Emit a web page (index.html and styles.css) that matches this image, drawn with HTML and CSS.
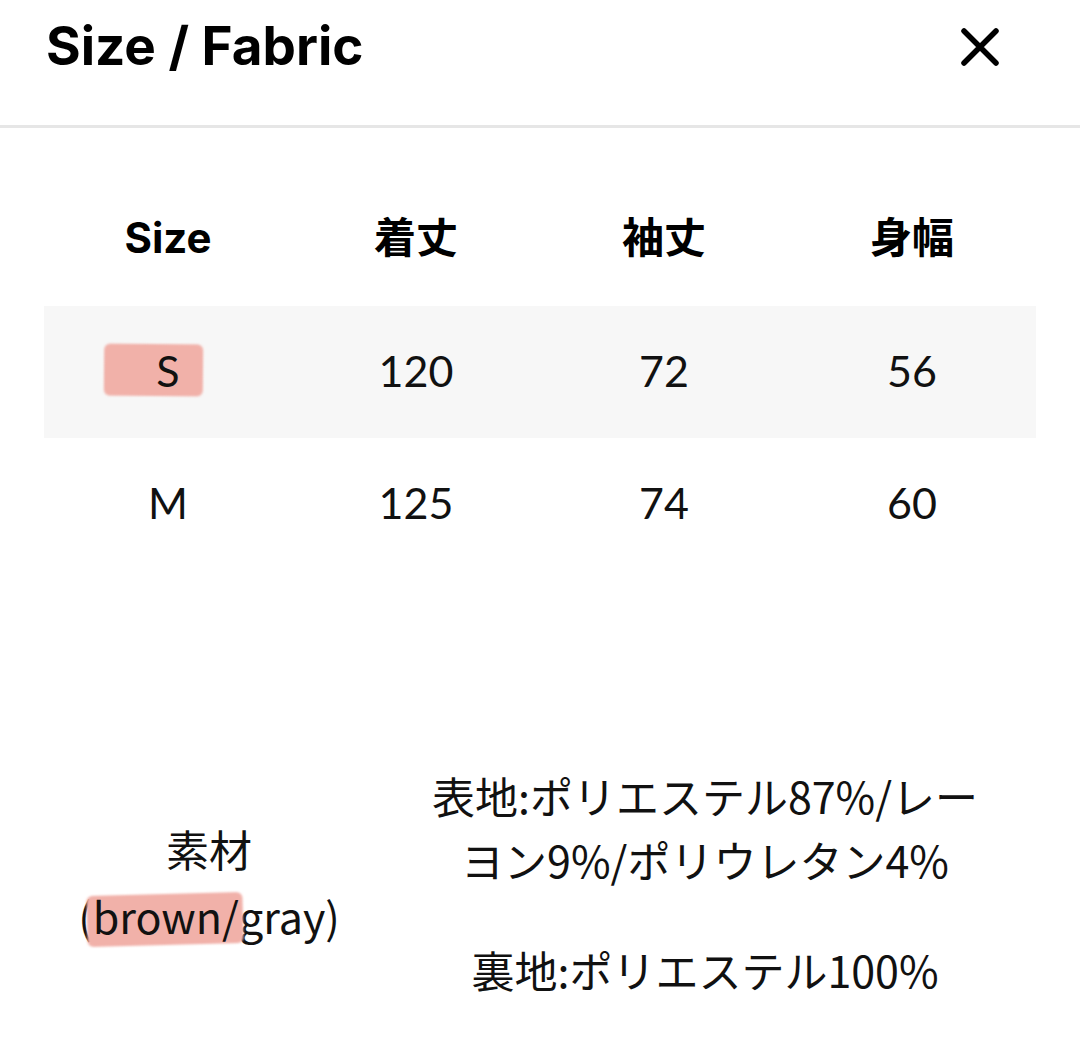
FILE: index.html
```html
<!DOCTYPE html>
<html lang="ja">
<head>
<meta charset="utf-8">
<link rel="stylesheet" href="styles.css">
</head>
<body>
<div class="sheet">
  <header class="head">
    <h1 class="title">Size / Fabric</h1>
    <button class="close" aria-label="close">
      <svg width="40" height="40" viewBox="0 0 40 40"><path d="M4 4 L36 36 M36 4 L4 36" stroke="#000" stroke-width="5.5" stroke-linecap="round" fill="none"/></svg>
    </button>
  </header>

  <div class="table">
    <div class="row row-head">
      <div class="cell">Size</div>
      <div class="cell">着丈</div>
      <div class="cell">袖丈</div>
      <div class="cell">身幅</div>
    </div>
    <div class="row row-alt">
      <div class="cell"><span class="mark-wrap"><span class="mark mark-s"></span><span class="mtext">S</span></span></div>
      <div class="cell">120</div>
      <div class="cell">72</div>
      <div class="cell">56</div>
    </div>
    <div class="row">
      <div class="cell">M</div>
      <div class="cell">125</div>
      <div class="cell">74</div>
      <div class="cell">60</div>
    </div>
  </div>

  <div class="fabric">
    <div class="f-label">
      <div>素材</div>
      <div>(<span class="mark-wrap"><span class="mark mark-b"></span><span class="mtext">brown/</span></span>gray)</div>
    </div>
    <div class="f-body">
      <p class="f-p">表地:ポリエステル87%/レー<br>ヨン9%/ポリウレタン4%</p>
      <p class="f-p">裏地:ポリエステル100%</p>
    </div>
  </div>
</div>
</body>
</html>
```

FILE: styles.css
```css
html, body {
  margin: 0;
  padding: 0;
  background: #ffffff;
}
body {
  font-family: "Lato", "Noto Sans CJK JP", sans-serif;
  color: #111111;
}
.sheet {
  width: 1080px;
}
.head {
  height: 128px;
  box-sizing: border-box;
  border-bottom: 3px solid #e6e6e6;
  display: flex;
  justify-content: space-between;
  align-items: flex-start;
  padding: 14px 80px 0 46px;
}
.title {
  margin: 0;
  font-family: "Inter", "Liberation Sans", sans-serif;
  font-weight: 700;
  font-size: 53px;
  line-height: 64px;
  letter-spacing: 0;
  color: #000;
}
.close {
  border: 0;
  background: none;
  padding: 0;
  margin-top: 13px;
  width: 40px;
  height: 40px;
}
.close svg {
  display: block;
}
.table {
  margin: 44px 44px 0 44px;
}
.row {
  display: grid;
  grid-template-columns: repeat(4, 1fr);
  height: 132px;
  align-items: center;
}
.row-head {
  height: 134px;
}
.row-alt {
  background: #f7f7f7;
}
.cell {
  text-align: center;
  font-size: 43px;
  line-height: 50px;
  color: #111;
  padding-bottom: 2px;
}
.row-head .cell {
  font-family: "Inter", "Noto Sans CJK JP", sans-serif;
  font-weight: 700;
  font-size: 42px;
  color: #000;
}
.mark-wrap {
  position: relative;
  display: inline-block;
}
.mtext {
  position: relative;
}
.mark {
  position: absolute;
  background: #f1b1a9;
  border-radius: 6px;
  filter: blur(1px);
}
.mark-s {
  left: -52px;
  right: -24px;
  top: -2px;
  bottom: 0;
  transform: rotate(0.5deg);
}
.mark-b {
  left: -6px;
  right: -4px;
  top: 12px;
  bottom: 4px;
  transform: rotate(-1.5deg);
}
.fabric {
  margin: 193px 44px 0 44px;
  display: grid;
  grid-template-columns: 330px 1fr;
  align-items: center;
}
.f-label {
  text-align: center;
  font-family: "Noto Sans CJK JP", sans-serif;
  font-size: 43px;
  line-height: 67px;
  color: #111;
}
.f-body {
  text-align: center;
  font-family: "Noto Sans CJK JP", sans-serif;
  font-size: 43px;
  line-height: 64px;
  color: #111;
}
.f-p {
  margin: 0;
}
.f-p + .f-p {
  margin-top: 46px;
}
```
